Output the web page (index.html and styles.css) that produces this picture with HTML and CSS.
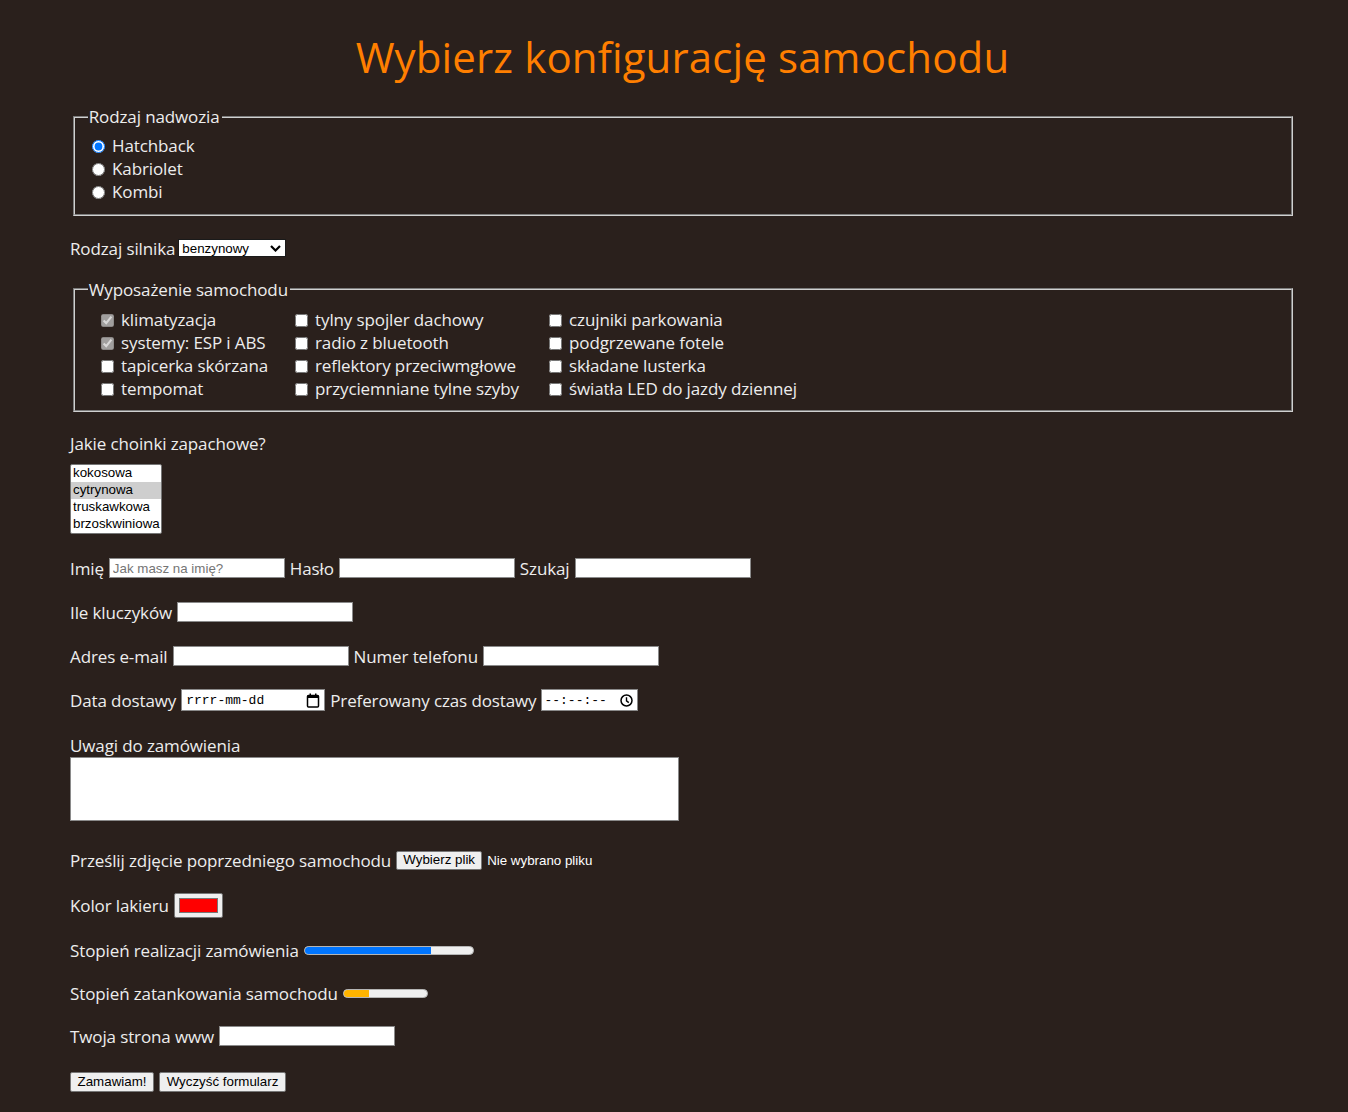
FILE: index.html
```html
<!DOCTYPE html>
<html lang="pl">
<head>
<meta charset="utf-8">
<title>Konfiguracja samochodu</title>
<link rel="stylesheet" href="styles.css">
</head>
<body>
<main class="page">
  <h1 class="title">Wybierz konfigurację samochodu</h1>
  <form class="form">
    <fieldset class="group group--body">
      <legend>Rodzaj nadwozia</legend>
      <label class="opt"><input type="radio" name="body" checked> Hatchback</label>
      <label class="opt"><input type="radio" name="body"> Kabriolet</label>
      <label class="opt"><input type="radio" name="body"> Kombi</label>
    </fieldset>

    <div class="row row--engine">
      <span>Rodzaj silnika</span>
      <span class="select-wrap">
        <select class="select"><option>benzynowy</option><option>diesel</option><option>elektryczny</option></select>
        <svg class="chev" width="11" height="7" viewBox="0 0 11 7"><polyline points="1,1 5.5,5.5 10,1" fill="none" stroke="#000" stroke-width="2.2"/></svg>
      </span>
    </div>

    <fieldset class="group group--features">
      <legend>Wyposażenie samochodu</legend>
      <div class="features">
        <div class="col col--1">
          <label class="opt"><input type="checkbox" checked disabled> klimatyzacja</label>
          <label class="opt"><input type="checkbox" checked disabled> systemy: ESP i ABS</label>
          <label class="opt"><input type="checkbox"> tapicerka skórzana</label>
          <label class="opt"><input type="checkbox"> tempomat</label>
        </div>
        <div class="col col--2">
          <label class="opt"><input type="checkbox"> tylny spojler dachowy</label>
          <label class="opt"><input type="checkbox"> radio z bluetooth</label>
          <label class="opt"><input type="checkbox"> reflektory przeciwmgłowe</label>
          <label class="opt"><input type="checkbox"> przyciemniane tylne szyby</label>
        </div>
        <div class="col col--3">
          <label class="opt"><input type="checkbox"> czujniki parkowania</label>
          <label class="opt"><input type="checkbox"> podgrzewane fotele</label>
          <label class="opt"><input type="checkbox"> składane lusterka</label>
          <label class="opt"><input type="checkbox"> światła LED do jazdy dziennej</label>
        </div>
      </div>
    </fieldset>

    <div class="row row--trees-label">Jakie choinki zapachowe?</div>
    <select class="listbox" multiple size="4">
      <option>kokosowa</option>
      <option selected>cytrynowa</option>
      <option>truskawkowa</option>
      <option>brzoskwiniowa</option>
    </select>

    <div class="row row--name">
      <span>Imię</span><input class="field" type="text" placeholder="Jak masz na imię?">
      <span>Hasło</span><input class="field" type="password">
      <span>Szukaj</span><input class="field" type="search">
    </div>

    <div class="row">
      <span>Ile kluczyków</span><input class="field" type="number">
    </div>

    <div class="row">
      <span>Adres e-mail</span><input class="field" type="email">
      <span>Numer telefonu</span><input class="field" type="tel">
    </div>

    <div class="row">
      <span>Data dostawy</span>
      <span class="fake fake--date"><span class="fake-text">rrrr-mm-dd</span>
        <svg width="14" height="15" viewBox="0 0 14 15"><rect x="1.5" y="2.5" width="11" height="11.5" rx="1" fill="none" stroke="#000" stroke-width="1.5"/><rect x="1.5" y="2.5" width="11" height="2.5" fill="#000"/><rect x="3.5" y="0.5" width="1.5" height="3" fill="#000"/><rect x="9" y="0.5" width="1.5" height="3" fill="#000"/></svg>
      </span>
      <span>Preferowany czas dostawy</span>
      <span class="fake fake--time"><span class="fake-text">--:--:--</span>
        <svg width="13" height="13" viewBox="0 0 13 13"><circle cx="6.5" cy="6.5" r="5.5" fill="none" stroke="#000" stroke-width="1.5"/><polyline points="6.5,3.2 6.5,6.8 8.8,8.6" fill="none" stroke="#000" stroke-width="1.4"/></svg>
      </span>
    </div>

    <div class="row row--notes">Uwagi do zamówienia</div>
    <textarea class="notes"></textarea>

    <div class="row row--file">
      <span>Prześlij zdjęcie poprzedniego samochodu</span>
      <span class="btn btn--file">Wybierz plik</span>
      <span class="file-status">Nie wybrano pliku</span>
    </div>

    <div class="row row--color">
      <span>Kolor lakieru</span>
      <span class="color"><span class="color-swatch"></span></span>
    </div>

    <div class="row row--progress">
      <span>Stopień realizacji zamówienia</span>
      <span class="bar bar--progress"><span class="bar-fill" style="width:75%"></span></span>
    </div>

    <div class="row row--meter">
      <span>Stopień zatankowania samochodu</span>
      <span class="bar bar--meter"><span class="bar-fill" style="width:30%"></span></span>
    </div>

    <div class="row row--www">
      <span>Twoja strona www</span><input class="field" type="url">
    </div>

    <div class="row row--buttons">
      <button class="btn btn--submit" type="submit">Zamawiam!</button>
      <button class="btn btn--reset" type="reset">Wyczyść formularz</button>
    </div>
  </form>
</main>
</body>
</html>
```

FILE: styles.css
```css
* { box-sizing: border-box; }
html, body { margin: 0; background: #2a201c; }
body {
  color: #ededed;
  font-family: "Open Sans", "Noto Sans", sans-serif;
  font-size: 17px;
  line-height: 23px;
  letter-spacing: -0.12px;
}
.page { padding: 32px 53px 12px 70px; }
.title {
  margin: 0 0 23px;
  text-align: center;
  font-size: 42px;
  line-height: 50px;
  font-weight: 400;
  letter-spacing: 0.13px;
  color: #ff7f00;
}
.form { display: block; }

.group {
  margin: 0 2px 0 3px;
  padding: 6px 12.75px 10.5px;
  border: 2px groove #d0d0d0;
  min-width: 0;
}
.group legend { padding: 0 2px 0 1px; line-height: 23px; }
.group--features { margin-top: 18px; padding-top: 7px; }

.opt { display: block; height: 23px; white-space: nowrap; }
.opt input { vertical-align: -1px; }
.group--body .opt input { margin-left: 4px; }

.features { display: flex; padding-left: 9px; }
.col { display: flex; flex-direction: column; }
.col--1 { width: 194px; }
.col--2 { width: 254px; }

.row {
  display: flex;
  align-items: center;
  gap: 5px;
  height: 23px;
  margin-top: 21px;
  white-space: nowrap;
}
.row--engine { margin-top: 21px; }
.row--trees-label { margin-top: 19.5px; }
.row--name { margin-top: 22.5px; }
.row--notes { margin-top: 22px; }
.row--file { margin-top: 27.5px; }
.row--color { margin-top: 22px; }
.row--progress { margin-top: 22px; }
.row--meter { margin-top: 20px; }
.row--www { margin-top: 20px; }
.row--buttons { margin-top: 23px; }

input, select, textarea, button {
  font-family: "Liberation Sans", Arial, sans-serif;
  font-size: 13.33px;
  letter-spacing: 0;
}

.select-wrap { position: relative; display: inline-flex; align-items: center; height: 18px; margin-left: -2px; }
.select {
  -webkit-appearance: none;
  appearance: none;
  display: block;
  width: 108px;
  height: 18px;
  margin: 0;
  padding: 1px 0 0 3px;
  border: 1px solid #1a1a1a;
  border-radius: 0;
  background: #fff;
  color: #000;
  line-height: 15px;
}
.chev { position: absolute; right: 5px; top: 6px; pointer-events: none; }

.listbox {
  display: block;
  width: 92px;
  height: 70px;
  margin: 9.5px 0 0;
  padding: 0;
  border: 1px solid #767676;
  background: #fff;
  color: #000;
  overflow: hidden;
}
.listbox option { padding: 0 2px; line-height: 17px; height: 17px; }
.listbox option:checked { background: #cecece; color: #000; }

.field {
  width: 176px;
  height: 20px;
  margin: 0;
  padding: 1px 3px;
  border: 1px solid #8a8a8a;
  background: #fff;
  color: #000;
}
.field::placeholder { color: #757575; }

.fake {
  display: inline-flex;
  align-items: center;
  justify-content: space-between;
  height: 22px;
  background: #fff;
  border: 1px solid #8a8a8a;
  color: #000;
  letter-spacing: 0;
}
.fake-text { font-family: "Liberation Mono", monospace; font-size: 13px; }
.fake--date { width: 144px; padding: 0 4px 0 4px; }
.fake--time { width: 97px; padding: 0 4px 0 2px; }

.notes {
  display: block;
  width: 609px;
  height: 64px;
  margin: 0.5px 0 0;
  border: 1px solid #8a8a8a;
  background: #fff;
  resize: none;
}

.btn {
  display: inline-flex;
  align-items: center;
  justify-content: center;
  height: 20px;
  margin: 0;
  padding: 0 6px;
  background: #efefef;
  border: 1px solid #767676;
  border-radius: 2px;
  color: #000;
  font-family: "Liberation Sans", Arial, sans-serif;
  font-size: 13.33px;
  line-height: 16px;
  letter-spacing: 0;
}
.btn--file { width: 86px; height: 19px; }
.btn--submit { width: 84px; }
.btn--reset { width: 127px; }
.file-status { font-family: "Liberation Sans", Arial, sans-serif; font-size: 13.33px; color: #fff; letter-spacing: 0; }

.color {
  display: inline-flex;
  align-items: center;
  justify-content: center;
  width: 49px;
  height: 25px;
  background: #efefef;
  border: 1px solid #767676;
  border-radius: 2px;
}
.color-swatch {
  width: 39px;
  height: 15px;
  background: #ff0000;
  border: 1px solid #777;
}

.bar {
  display: inline-block;
  height: 9px;
  background: #efefef;
  border: 1px solid #b5b5b5;
  border-radius: 5px;
  overflow: hidden;
}
.bar-fill { display: block; height: 100%; }
.bar--progress { width: 170px; }
.bar--progress .bar-fill { background: #0075ff; }
.bar--meter { width: 85px; }
.bar--meter .bar-fill { background: #ffb400; }
```
